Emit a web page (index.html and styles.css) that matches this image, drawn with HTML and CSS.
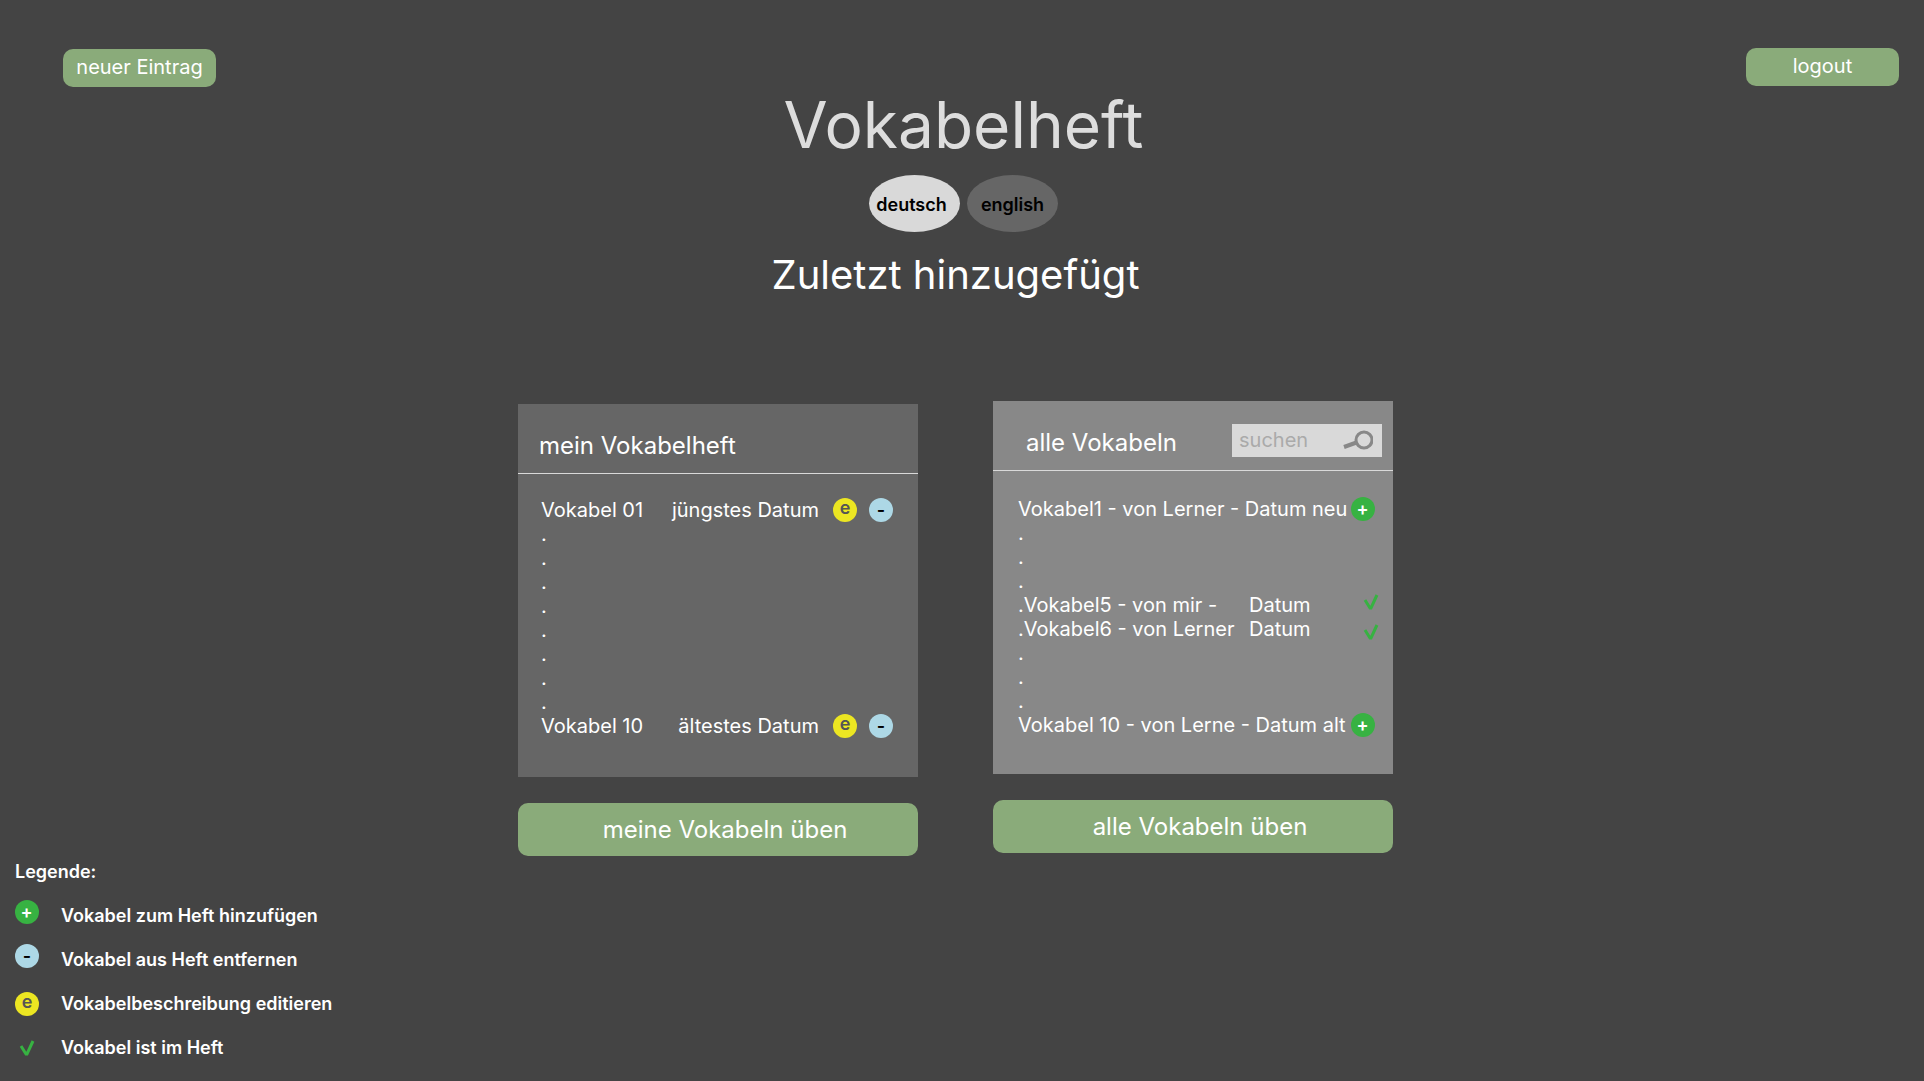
FILE: index.html
```html
<!DOCTYPE html>
<html lang="de">
<head>
  <meta charset="utf-8">
  <meta name="viewport" content="width=device-width, initial-scale=1">
  <title>Vokabelheft</title>
  <link rel="stylesheet" href="styles.css">
</head>
<body>
  <header class="topbar">
    <button class="btn btn-small" type="button">neuer Eintrag</button>
    <button class="btn btn-small btn-logout" type="button">logout</button>
  </header>

  <main class="main">
    <div class="masthead">
      <h1 class="title">Vokabelheft</h1>
      <div class="languages">
        <button class="pill pill-active" type="button">deutsch</button>
        <button class="pill" type="button">english</button>
      </div>
    </div>
    <h2 class="subtitle">Zuletzt hinzugefügt</h2>

    <div class="columns">
      <section class="column column-own">
        <div class="panel">
          <div class="panel-head">
            <h3 class="panel-title">mein Vokabelheft</h3>
          </div>
          <ul class="entries">
            <li class="entry">
              <span>Vokabel 01</span>
              <span class="date">jüngstes Datum</span>
              <button class="badge badge-edit" type="button">e</button>
              <button class="badge badge-remove" type="button">-</button>
            </li>
            <li class="entry">.</li>
            <li class="entry">.</li>
            <li class="entry">.</li>
            <li class="entry">.</li>
            <li class="entry">.</li>
            <li class="entry">.</li>
            <li class="entry">.</li>
            <li class="entry">.</li>
            <li class="entry">
              <span>Vokabel 10</span>
              <span class="date">ältestes Datum</span>
              <button class="badge badge-edit" type="button">e</button>
              <button class="badge badge-remove" type="button">-</button>
            </li>
          </ul>
        </div>
        <button class="btn btn-large" type="button">meine Vokabeln üben</button>
      </section>

      <section class="column column-all">
        <div class="panel">
          <div class="panel-head">
            <h3 class="panel-title">alle Vokabeln</h3>
            <form class="search">
              <input class="search-input" type="text" placeholder="suchen" aria-label="suchen">
              <svg class="search-icon" viewBox="0 0 30 20" aria-hidden="true">
                <circle cx="21" cy="10" r="8"/>
                <path d="M13.5 12.5L1 17"/>
              </svg>
            </form>
          </div>
          <ul class="entries">
            <li class="entry">
              <span>Vokabel1 - von Lerner - Datum neu</span>
              <button class="badge badge-add" type="button">+</button>
            </li>
            <li class="entry">.</li>
            <li class="entry">.</li>
            <li class="entry">.</li>
            <li class="entry">
              <span class="word">.Vokabel5 - von mir -</span>
              <span>Datum</span>
              <svg class="check check-top" viewBox="0 0 16 18" aria-hidden="true"><path d="M2 7L7 15H8L14 2"/></svg>
            </li>
            <li class="entry">
              <span class="word">.Vokabel6 - von Lerner</span>
              <span>Datum</span>
              <svg class="check check-bottom" viewBox="0 0 16 18" aria-hidden="true"><path d="M2 7L7 15H8L14 2"/></svg>
            </li>
            <li class="entry">.</li>
            <li class="entry">.</li>
            <li class="entry">.</li>
            <li class="entry">
              <span>Vokabel 10 - von Lerne - Datum alt</span>
              <button class="badge badge-add" type="button">+</button>
            </li>
          </ul>
        </div>
        <button class="btn btn-large" type="button">alle Vokabeln üben</button>
      </section>
    </div>
  </main>

  <footer class="legend">
    <h2 class="legend-title">Legende:</h2>
    <ul class="legend-list">
      <li class="legend-item legend-item-tall">
        <span class="badge badge-add">+</span>
        <span class="legend-text">Vokabel zum Heft hinzufügen</span>
      </li>
      <li class="legend-item legend-item-tall">
        <span class="badge badge-remove">-</span>
        <span class="legend-text">Vokabel aus Heft entfernen</span>
      </li>
      <li class="legend-item">
        <span class="badge badge-edit">e</span>
        <span class="legend-text">Vokabelbeschreibung editieren</span>
      </li>
      <li class="legend-item">
        <span class="badge"><svg class="check" viewBox="0 0 16 18" aria-hidden="true"><path d="M2 7L7 15H8L14 2"/></svg></span>
        <span class="legend-text">Vokabel ist im Heft</span>
      </li>
    </ul>
  </footer>
</body>
</html>
```

FILE: styles.css
```css
* {
  box-sizing: border-box;
}

body {
  display: flex;
  flex-direction: column;
  min-height: 100vh;
  margin: 0;
  background: #444;
  color: #fff;
  font-family: Inter, "Liberation Sans", sans-serif;
  font-size: 20px;
  font-weight: 400;
  line-height: 24px;
}

h1,
h2,
h3,
ul {
  margin: 0;
  padding: 0;
  font-weight: 400;
}

ul {
  list-style: none;
}

button,
input {
  margin: 0;
  padding: 0;
  border: 0;
  color: inherit;
  font: inherit;
}

button {
  cursor: pointer;
}

.topbar {
  display: flex;
  justify-content: space-between;
  align-items: flex-end;
  padding: 48px 25px 0 63px;
}

.btn {
  border-radius: 10px;
  background: #8aab7a;
}

.btn-small {
  width: 153px;
  height: 38px;
  padding-bottom: 2px;
}

.btn-logout {
  margin-bottom: 1px;
}

.btn-large {
  height: 53px;
  padding-left: 14px;
  font-size: 24px;
}

.main {
  display: flex;
  flex-direction: column;
  align-items: center;
  padding-right: 13px;
}

.masthead {
  display: flex;
  flex-direction: column;
  align-items: center;
  gap: 12px;
  padding-left: 16px;
}

.title {
  color: #ddd;
  font-size: 64px;
  line-height: 76px;
}

.languages {
  display: flex;
  gap: 7px;
}

.pill {
  width: 91px;
  height: 57px;
  padding-top: 2px;
  border-radius: 50%;
  background: #666;
  color: #000;
  font-size: 18px;
  font-weight: 600;
}

.pill-active {
  padding-right: 6px;
  background: #d9d9d9;
}

.subtitle {
  margin-top: 19px;
  font-size: 40px;
  line-height: 48px;
}

.columns {
  display: flex;
  flex-wrap: wrap;
  justify-content: center;
  gap: 75px;
  margin-top: 102px;
}

.column {
  display: flex;
  flex-direction: column;
  gap: 26px;
  width: 400px;
}

.column-own {
  padding-top: 3px;
}

.panel {
  background: #666;
}

.column-all .panel {
  background: #888;
}

.panel-head {
  display: flex;
  justify-content: space-between;
  align-items: flex-start;
  height: 70px;
  padding: 23px 11px 0 21px;
  border-bottom: 1px solid #d9d9d9;
}

.column-all .panel-head {
  padding-left: 33px;
}

.panel-title {
  font-size: 24px;
  line-height: 38px;
}

.search {
  display: flex;
  align-items: center;
  width: 150px;
  height: 33px;
  padding: 0 9px 2px 7px;
  background: #d9d9d9;
}

.search-input {
  flex: 1;
  min-width: 0;
  background: none;
  color: #444;
  outline: 0;
}

.search-input::placeholder {
  color: #aaa;
  opacity: 1;
}

.search-icon {
  width: 30px;
  height: 20px;
  fill: none;
  stroke: #888;
  stroke-width: 3;
}

.search-icon path {
  stroke-width: 4;
}

.entries {
  padding: 24px 25px 39px 23px;
}

.column-all .entries {
  padding: 26px 18px 37px 25px;
}

.entry {
  display: flex;
  align-items: center;
  height: 24px;
  white-space: nowrap;
}

.date {
  margin-left: auto;
}

.word {
  width: 231px;
}

.badge {
  display: flex;
  flex: none;
  justify-content: center;
  align-items: center;
  width: 24px;
  height: 24px;
  padding-bottom: 1px;
  border-radius: 50%;
  font-size: 18px;
  font-weight: 600;
  line-height: 20px;
}

.badge-edit {
  padding-bottom: 4px;
  background: #ece622;
  color: #555;
}

.badge-remove {
  background: #add8e6;
  color: #000;
}

.badge-add {
  padding-right: 1px;
  background: #37b242;
  color: #fff;
}

.entry .badge-edit {
  margin: 0 12px 0 14px;
}

.entry .badge-add {
  margin-left: auto;
}

.check {
  width: 16px;
  height: 18px;
  fill: none;
  stroke: #37b242;
  stroke-width: 3;
}

.entry .check {
  margin: 0 -4px 0 auto;
}

.check-top {
  align-self: flex-start;
}

.check-bottom {
  align-self: flex-end;
}

.legend {
  margin-top: auto;
  padding: 0 15px 21px;
}

.legend-title,
.legend-text {
  font-size: 18px;
  font-weight: 600;
  line-height: 24px;
}

.legend-item {
  display: flex;
  gap: 22px;
  margin-top: 20px;
}

.legend-item-tall {
  height: 28px;
  margin-top: 16px;
}

.legend-item-tall .legend-text {
  align-self: flex-end;
}
```
